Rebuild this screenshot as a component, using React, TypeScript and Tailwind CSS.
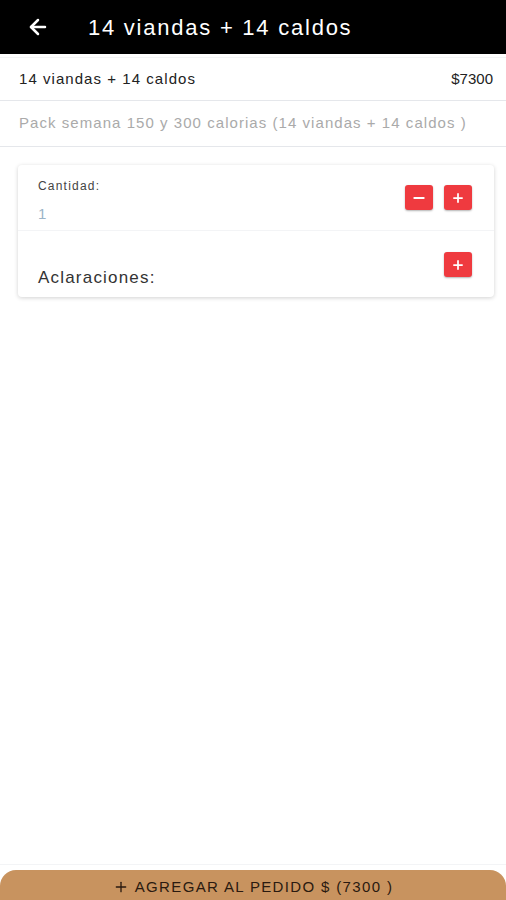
import { ArrowLeft, Plus, Minus } from 'lucide-react'

export default function App() {
  return (
    <div className="relative h-[900px] w-[506px] overflow-hidden bg-white font-[family-name:'Liberation_Sans',Arial,sans-serif] tracking-[0.075em]">
      {/* Barra superior */}
      <header className="flex h-[54px] items-center bg-black px-[26px]">
        <ArrowLeft className="h-6 w-6 text-white" strokeWidth={2.5} />
        <h1 className="ml-[38px] text-[22px] tracking-[0.08em] text-white">14 viandas + 14 caldos</h1>
      </header>
      <div className="h-1 border-b border-gray-100" />

      <div className="flex h-[43px] items-center justify-between border-b border-gray-200 pl-[19px] pr-[13px] text-[15px] tracking-[0.07em] text-[#222]">
        <span>14 viandas + 14 caldos</span>
        <span className="tracking-normal">$7300</span>
      </div>
      <div className="flex h-[46px] items-center border-b border-gray-200 px-[19px] text-[15px] tracking-[0.07em] text-[#aaa]">
        Pack semana 150 y 300 calorias (14 viandas + 14 caldos )
      </div>

      {/* Tarjeta */}
      <div className="ml-[18px] mr-[12px] mt-[18px] rounded-sm bg-white shadow-[0_1px_4px_rgba(0,0,0,0.18)]">
        <div className="flex h-[66px] items-start justify-between border-b border-gray-100 pl-5 pr-[22px]">
          <div className="pt-[12px]">
            <div className="text-[12px] text-[#444]">Cantidad:</div>
            <div className="mt-[8px] text-[15px] text-[#9bb4c8]">1</div>
          </div>
          <div className="mt-[20px] flex gap-[11px]">
            <button className="flex h-[25px] w-[28px] items-center justify-center rounded-[3px] bg-[#ef3a3f] shadow-[0_1px_2px_rgba(0,0,0,0.3)]">
              <Minus className="h-4 w-4 text-white" strokeWidth={3} />
            </button>
            <button className="flex h-[25px] w-[28px] items-center justify-center rounded-[3px] bg-[#ef3a3f] shadow-[0_1px_2px_rgba(0,0,0,0.3)]">
              <Plus className="h-3.5 w-3.5 text-white" strokeWidth={3} />
            </button>
          </div>
        </div>
        <div className="flex h-[66px] justify-between pl-5 pr-[22px]">
          <div className="self-end pb-[7px] text-[17px] text-[#333]">Aclaraciones:</div>
          <button className="mt-[21px] flex h-[25px] w-[28px] items-center justify-center rounded-[3px] bg-[#ef3a3f] shadow-[0_1px_2px_rgba(0,0,0,0.3)]">
            <Plus className="h-3.5 w-3.5 text-white" strokeWidth={3} />
          </button>
        </div>
      </div>

      {/* Botón inferior */}
      <div className="absolute bottom-0 left-0 right-0 border-t border-gray-100 pt-[5px]">
        <button className="flex h-[30px] w-full items-center justify-center gap-1.5 rounded-t-[16px] bg-[#c8935f] pt-[4px] text-[15px] tracking-[0.09em] text-[#2a1a10]">
          <Plus className="h-4 w-4" strokeWidth={2} />
          AGREGAR AL PEDIDO $ (7300 )
        </button>
      </div>
    </div>
  )
}
